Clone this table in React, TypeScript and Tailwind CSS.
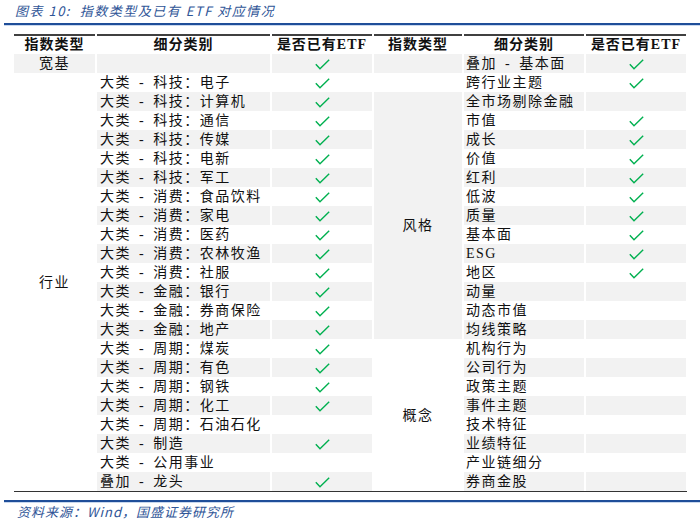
import React from 'react';

type Row = {
  sub: string;
  etf: boolean;
  rsub: string;
  retf: boolean;
};

const rows: Row[] = [
  { sub: '', etf: true, rsub: '叠加 - 基本面', retf: true },
  { sub: '大类 - 科技：电子', etf: true, rsub: '跨行业主题', retf: true },
  { sub: '大类 - 科技：计算机', etf: true, rsub: '全市场剔除金融', retf: false },
  { sub: '大类 - 科技：通信', etf: true, rsub: '市值', retf: true },
  { sub: '大类 - 科技：传媒', etf: true, rsub: '成长', retf: true },
  { sub: '大类 - 科技：电新', etf: true, rsub: '价值', retf: true },
  { sub: '大类 - 科技：军工', etf: true, rsub: '红利', retf: true },
  { sub: '大类 - 消费：食品饮料', etf: true, rsub: '低波', retf: true },
  { sub: '大类 - 消费：家电', etf: true, rsub: '质量', retf: true },
  { sub: '大类 - 消费：医药', etf: true, rsub: '基本面', retf: true },
  { sub: '大类 - 消费：农林牧渔', etf: true, rsub: 'ESG', retf: true },
  { sub: '大类 - 消费：社服', etf: true, rsub: '地区', retf: true },
  { sub: '大类 - 金融：银行', etf: true, rsub: '动量', retf: false },
  { sub: '大类 - 金融：券商保险', etf: true, rsub: '动态市值', retf: false },
  { sub: '大类 - 金融：地产', etf: true, rsub: '均线策略', retf: false },
  { sub: '大类 - 周期：煤炭', etf: true, rsub: '机构行为', retf: false },
  { sub: '大类 - 周期：有色', etf: true, rsub: '公司行为', retf: false },
  { sub: '大类 - 周期：钢铁', etf: true, rsub: '政策主题', retf: false },
  { sub: '大类 - 周期：化工', etf: true, rsub: '事件主题', retf: false },
  { sub: '大类 - 周期：石油石化', etf: false, rsub: '技术特征', retf: false },
  { sub: '大类 - 制造', etf: true, rsub: '业绩特征', retf: false },
  { sub: '大类 - 公用事业', etf: false, rsub: '产业链细分', retf: false },
  { sub: '叠加 - 龙头', etf: true, rsub: '券商金股', retf: false },
];

function Check() {
  return (
    <svg width="15" height="11" viewBox="0 0 15 11" className="inline-block">
      <path d="M0.8 5.2 L5 9.8 L14.2 0.8" fill="none" stroke="#00b050" strokeWidth="1.4" />
    </svg>
  );
}

const grey = 'bg-[#f2f2f2]';

export default function App() {
  return (
    <div
      className="w-[700px] h-[520px] bg-white text-[#111] overflow-hidden"
      style={{ fontFamily: '"Liberation Serif", "Noto Sans CJK SC", serif' }}
    >
      {/* Title */}
      <div className="h-[23px] pl-[15px] pt-[1px] text-[13px] leading-[20px] italic tracking-[1.5px] text-[#2f5597] font-['Noto_Sans_CJK_SC',sans-serif]">
        图表 10:&nbsp; 指数类型及已有 ETF 对应情况
      </div>
      <div className="ml-[4px] h-[2px] bg-[#1f4e99]" />
      <div className="ml-[4px] h-[1px] bg-[#c9d8ee]" />

      {/* Table */}
      <div className="mt-[8px] ml-[12px] w-[676px]">
        <table className="w-full table-fixed border-separate border-spacing-x-[2px] border-spacing-y-0 text-[14px] tracking-[1.5px] [word-spacing:3px]">
          <colgroup>
            <col className="w-[81px]" />
            <col className="w-[173px]" />
            <col className="w-[100px]" />
            <col className="w-[88px]" />
            <col className="w-[120px]" />
            <col className="w-[100px]" />
          </colgroup>
          <thead>
            <tr className="h-[20px]">
              {['指数类型', '细分类别', '是否已有ETF', '指数类型', '细分类别', '是否已有ETF'].map((h, i) => (
                <th
                  key={i}
                  className="border-t-2 border-[#404040] p-0 text-center font-semibold leading-[18px] tracking-[1px]"
                >
                  {h}
                </th>
              ))}
            </tr>
          </thead>
          <tbody>
            {rows.map((r, i) => {
              const bg = i % 2 === 0 ? grey : 'bg-white';
              return (
                <tr key={i} className="h-[19px] leading-[19px]">
                  {i === 0 && <td className={`${grey} p-0 text-center`}>宽基</td>}
                  {i === 1 && (
                    <td rowSpan={22} className="bg-white p-0 text-center align-middle">
                      行业
                    </td>
                  )}
                  <td className={`${bg} p-0 pl-[3px] whitespace-nowrap`}>{r.sub}</td>
                  <td className={`${bg} p-0 text-center`}>{r.etf && <Check />}</td>
                  {i < 3 && <td className={`${bg} p-0`} />}
                  {i === 3 && (
                    <td rowSpan={12} className={`${grey} p-0 text-center align-middle`}>
                      风格
                    </td>
                  )}
                  {i === 15 && (
                    <td rowSpan={8} className="bg-white p-0 text-center align-middle">
                      概念
                    </td>
                  )}
                  <td className={`${bg} p-0 pl-[2px] whitespace-nowrap`}>{r.rsub}</td>
                  <td className={`${bg} p-0 text-center`}>{r.retf && <Check />}</td>
                </tr>
              );
            })}
          </tbody>
        </table>
        <div className="ml-[2px] w-[673px] h-[1px] bg-[#333]" />
      </div>

      {/* Source */}
      <div className="mt-[8px] ml-[4px] h-[2px] bg-[#1f4e99]" />
      <div className="ml-[4px] h-[1px] bg-[#c9d8ee]" />
      <div className="pl-[17px] text-[13px] leading-[17px] italic tracking-[1px] text-[#2f5597] font-['Noto_Sans_CJK_SC',sans-serif]">
        资料来源：Wind，国盛证券研究所
      </div>
    </div>
  );
}
